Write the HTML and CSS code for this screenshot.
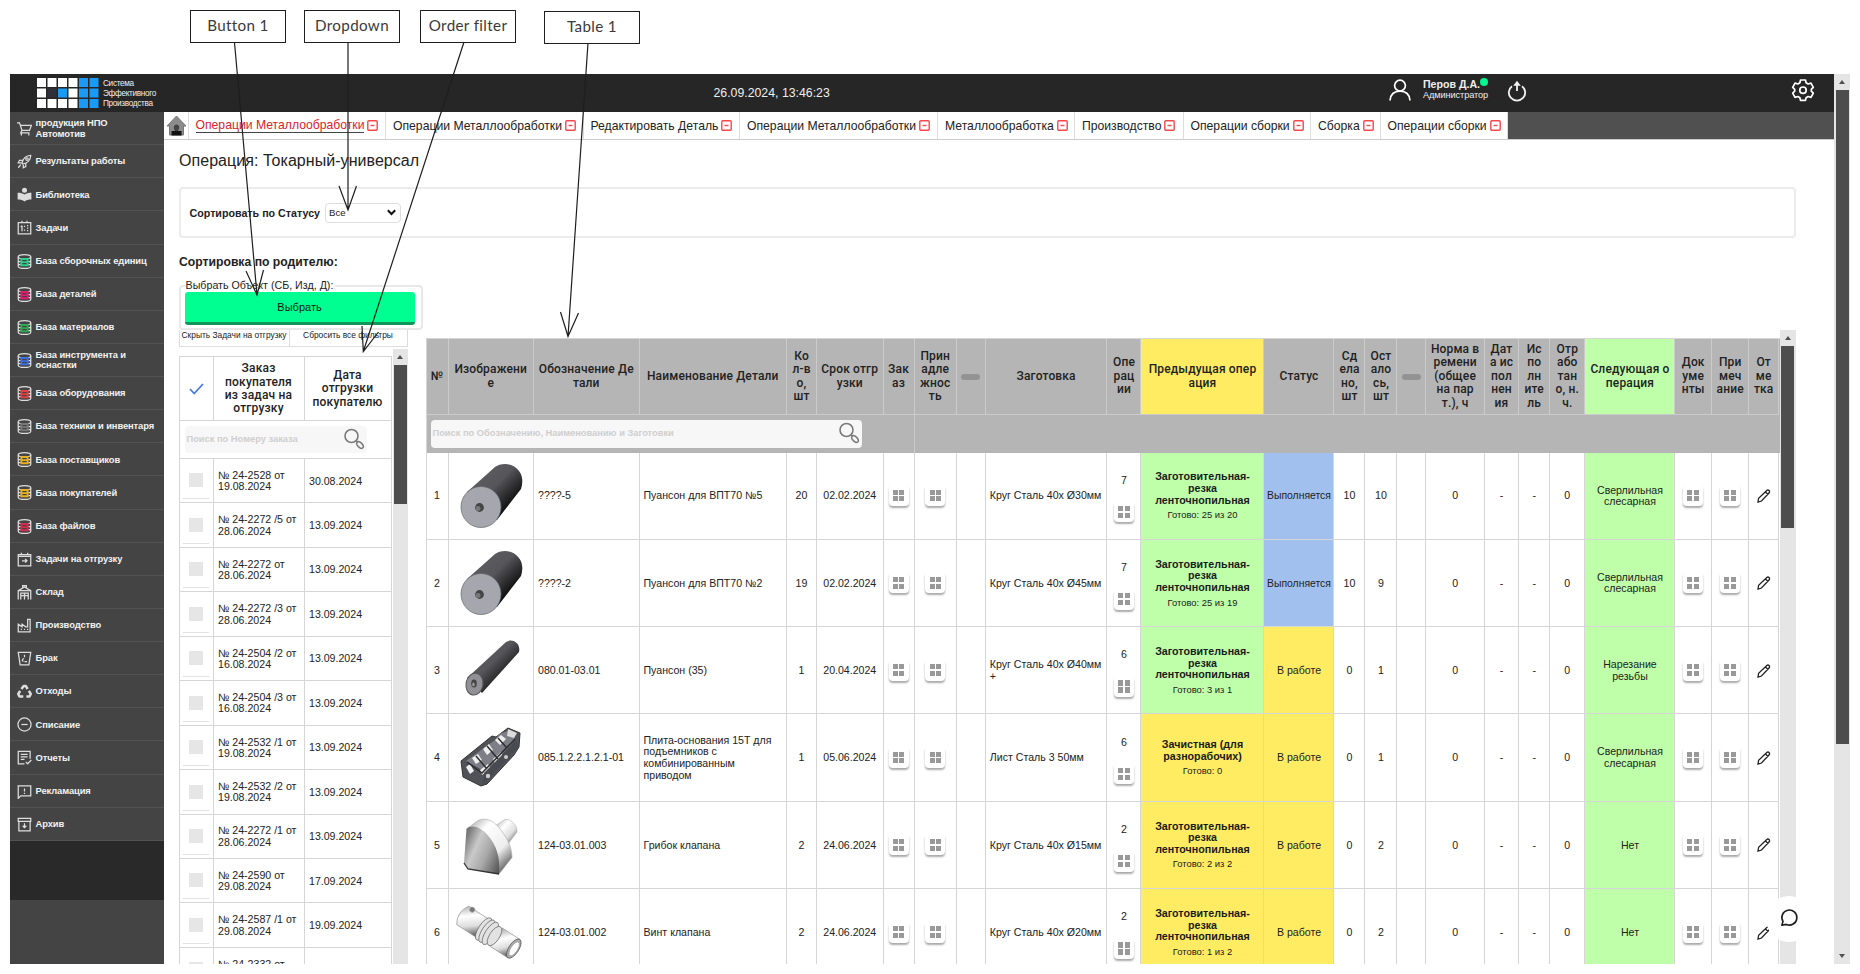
FILE: index.html
```html
<!DOCTYPE html>
<html lang="ru">
<head>
<meta charset="utf-8">
<title>Операции Металлообработки</title>
<link rel="stylesheet" href="styles.css">
</head>
<body>
<div class="app">
  <div class="page">
    <header class="top">
      <svg class="logo" width="62" height="31" viewBox="0 0 62 31" id="logo"></svg>
      <div class="brand">Система<br>Эффективного<br>Производства</div>
      <div class="clock">26.09.2024, 13:46:23</div>
      <svg class="person" width="24" height="24" viewBox="0 0 24 24" fill="none" stroke="#fff" stroke-width="1.7"><circle cx="12" cy="7.6" r="5.4"/><path d="M2 22.5C2.5 16.5 6 13.2 12 13.2s9.500 3.300 10 9.300"/></svg>
      <div class="user"><b>Перов Д.А.<i class="dot"></i></b><span>Администратор</span></div>
      <svg class="power" width="22" height="24" viewBox="0 0 22 24" fill="none" stroke="#f2f2f2" stroke-width="1.800"><path d="M6 7.200A8.200 8 0 1 0 16 7.200M11 12V4"/><path d="M7.200 6.800 11 1.800l3.800 5z" fill="#f2f2f2" stroke="none"/></svg>
      <svg class="gear" width="24" height="24" viewBox="0 0 24 24" fill="none" stroke="#fff" stroke-width="1.7" stroke-linejoin="round"><path d="M9.500 2h5l.6 2.800 2 1.200 2.900-.9 2.300 4.200-2 2v1.900l2 2-2.300 4.200-2.900-.9-2 1.200-.6 2.600h-5l-.6-2.600-2-1.200-2.900.9-2.300-4.200 2-2v-1.900l-2-2L4 5.100l2.900.9 2-1.200z"/><circle cx="12" cy="12.200" r="3.200"/></svg>
    </header>
    <div class="below">
      <nav class="side" id="side"></nav>
      <main class="main">
        <div class="tabs" id="tabs">
          <div class="home"><svg width="21" height="22" viewBox="0 0 21 22"><path d="M10.500 1 1 11h2.500v9h14v-9H20z" fill="#8c8c8c" stroke="#777"/><path d="M7.500 20c-1-3 .5-4 1.500-4.500-2-2-1.500-6 1.500-6s3.500 4 1.500 6c1 .5 2.500 1.500 1.500 4.500z" fill="#444"/><path d="M5.500 16h10v4.500h-10z" fill="#111"/></svg></div>
        </div>
        <h1 class="title">Операция: Токарный-универсал</h1>
        <section class="filter">
          <b class="filter-label">Сортировать по Статусу</b>
          <div class="select"><span>Все</span><svg width="9" height="7" viewBox="0 0 9 7"><path d="m.8 1.200 3.700 3.800 3.700-3.800" fill="none" stroke="#111" stroke-width="2"/></svg></div>
        </section>
        <b class="parent">Сортировка по родителю:</b>
        <div class="work">
          <section class="orders">
            <fieldset class="pick"><legend>Выбрать Объект (СБ, Изд, Д):</legend><button class="choose">Выбрать</button></fieldset>
            <div class="actions"><span>Скрыть Задачи на отгрузку</span><span>Сбросить все фильтры</span></div>
            <div class="list">
              <div class="list-body" id="orders">
                <div class="orow ohead"><div><svg width="15" height="12" viewBox="0 0 15 12"><path d="m1 6 4.200 4.500L14 1" fill="none" stroke="#4a78e8" stroke-width="1.800"/></svg></div><div>Заказ<br>покупателя<br>из задач на<br>отгрузку</div><div>Дата<br>отгрузки<br>покупателю</div></div>
                <div class="osearch"><div class="field"><span>Поиск по Номеру заказа</span><svg width="22" height="22" viewBox="0 0 22 22" fill="none" stroke="#7a7a7a"><circle cx="8.500" cy="8" r="6.500" stroke-width="1.600"/><path d="m13 12.500 2 2" stroke-width="1.500"/><ellipse cx="17" cy="17" rx="4" ry="2.300" transform="rotate(45 17 17)" stroke-width="1.500"/></svg></div></div>
              </div>
              <div class="bar bar-list"><i class="up"></i><i class="thumb"></i></div>
            </div>
          </section>
          <section class="parts">
            <div class="table" id="table"></div>
            <div class="bar bar-table"><i class="up"></i><i class="thumb"></i></div>
          </section>
        </div>
        <div class="chat"><svg width="19" height="19" viewBox="0 0 19 19"><path d="M1.800 17.200 3 13.500A7.500 7.500 0 1 1 6.300 16.400z" fill="none" stroke="#1c1c1c" stroke-width="1.600" stroke-linejoin="round"/></svg></div>
      </main>
    </div>
  </div>
  <div class="bar bar-page"><i class="up"></i><i class="thumb"></i><i class="down"></i></div>
</div>

<div class="note n1">Button 1</div>
<div class="note n2">Dropdown</div>
<div class="note n3">Order filter</div>
<div class="note n4">Table 1</div>
<svg class="arrows" width="700" height="360" viewBox="0 0 700 360" fill="none" stroke="#1e1e1e" stroke-width="1.200"><path d="M234.500 42.500 257 295M246 271l11 24 6.500-25M348 42v168M339 186l9 24 8.500-24M464 42 363.300 351.500M362 326l1.300 25.500 15.200-19.500M588 43l-20 293.500M560.500 312l7.500 24.500 10.500-23.500"/></svg>
<script src="app.js"></script>
</body>
</html>
```
FILE: styles.css
```css
* { box-sizing: border-box; }
body { margin: 0; width: 1860px; height: 974px; overflow: hidden; background: #fff; color: #222; font-family: "Liberation Sans", Arial, sans-serif; }
.app { display: flex; margin: 74px 10px 10px; height: 890px; overflow: hidden; }
.page { width: 1824px; display: flex; flex-direction: column; }
.top { height: 38px; background: #262626; color: #eee; display: flex; align-items: flex-start; flex: none; }
.logo { margin: 3.500px 0 0 26.500px; }
.brand { margin: 4.500px 0 0 4.500px; width: 610.500px; font-size: 8.200px; line-height: 10.200px; letter-spacing: -.3px; }
.clock { margin-top: 12px; width: 674px; font-size: 12.300px; line-height: 15px; }
.person { margin-top: 4px; }
.user { margin: 4px 0 0 11.500px; width: 82px; display: flex; flex-direction: column; font-size: 9.200px; line-height: 11px; letter-spacing: -.1px; }
.user b { font-size: 10.600px; line-height: 12px; white-space: nowrap; letter-spacing: 0; }
.dot { display: inline-block; width: 8px; height: 8px; border-radius: 50%; background: #00f78f; vertical-align: 2px; }
.power { margin: 5px 0 0 1px; }
.gear { margin: 4px 0 0 262.500px; }
.below { display: flex; flex: 1; min-height: 0; }
.side { width: 153.500px; background: #444; color: #f2f2f2; flex: none; }
.item { height: 33.130px; display: flex; align-items: center; gap: 3.500px; padding: 1px 0 0 7px; border-bottom: 1px solid #525252; font-size: 9.400px; line-height: 10.500px; font-weight: bold; letter-spacing: -.1px; white-space: nowrap; }
.item svg { flex: none; }
.side-dark { height: 59px; background: #292929; }
.main { flex: 1; min-width: 0; position: relative; }
.tabs { height: 28px; background: #505050; display: flex; border-bottom: 1px solid #ccc; }
.home { width: 25.500px; background: #fff; border-right: 1px solid #ddd; padding: 3px 0 0 2px; }
.tab { background: #fff; border-right: 1px solid #ddd; padding: 0 0 0 7px; display: flex; align-items: center; gap: 3px; font-size: 12.200px; white-space: nowrap; color: #222; }
.tab.on { color: #d8232a; padding-left: 6.500px; }
.tab.on span { border-bottom: 1px solid #444; line-height: 14px; }
.title { margin: 12px 0 0 15.500px; height: 18px; font-size: 16px; line-height: 18px; font-weight: normal; letter-spacing: .05px; }
.filter { margin: 17px 0 0 15px; width: 1617px; height: 51px; border: 2px solid #ececec; border-radius: 4px; display: flex; align-items: center; padding-left: 9px; }
.filter-label { width: 135.500px; font-size: 10.700px; white-space: nowrap; }
.select { width: 76px; height: 20px; border: 1px solid #ddd; border-radius: 4px; display: flex; align-items: center; justify-content: space-between; padding: 0 4px 0 3px; font-size: 9.600px; }
.parent { display: block; margin: 17px 0 0 15.500px; height: 14px; font-size: 12.200px; line-height: 14px; }
.work { display: flex; margin: 11px 0 0 15px; height: 684px; }
.orders { width: 247px; }
.pick { margin: 0; width: 244px; height: 50px; border: 2px solid #e8e8e8; border-radius: 4px; padding: 0 5px; min-width: 0; }
.pick legend { padding: 0 2px 0 0; font-size: 10.700px; height: 12px; line-height: 10px; }
.choose { display: block; width: 230px; height: 33px; border: 0; border-bottom: 3px solid #12955a; border-radius: 3px; background: #00ff91; font: 11px "Liberation Sans", Arial, sans-serif; padding: 0; color: #111; margin-left: -1px; }
.actions { display: flex; height: 17px; width: 229px; border: 1px solid #ddd; border-top: 0; font-size: 8.400px; line-height: 10px; text-align: center; white-space: nowrap; }
.actions span { width: 110px; border-right: 1px solid #ddd; }
.actions span + span { width: 117px; border: 0; }
.list { display: flex; height: 617px; margin-top: 2px; }
.list-body { width: 213px; margin-top: 7px; border: 1px solid #d6d6d6; border-right: 0; margin-right: 1px; overflow: hidden; }
.orow { display: grid; grid-template-columns: 34px 91px 87px; height: 44.450px; font-size: 10.600px; line-height: 11.300px; }
.orow > div { border-right: 1px solid #d6d6d6; border-bottom: 1px solid #d6d6d6; display: flex; align-items: center; padding: 1px 0 0 4.500px; white-space: nowrap; }
.orow > .cb { padding: 0 4px 3px; flex-direction: column; justify-content: flex-end; gap: 11px; }
.cb i { width: 14px; height: 14px; background: #e6e6e6; }
.cb u { width: 26px; height: 1px; background: #e2e2e2; }
.orow.ohead { height: 64px; font-size: 12px; line-height: 13.400px; text-align: center; font-family: Roboto, sans-serif; font-weight: 500; letter-spacing: .2px; }
.orow.ohead > div { justify-content: center; padding: 1px 0 0; }
.osearch { height: 38px; border-bottom: 1px solid #d6d6d6; border-right: 1px solid #d6d6d6; padding: 5px; }
.field { width: 182px; height: 27px; border-radius: 4px; background: #f7f7f7; display: flex; align-items: center; justify-content: space-between; padding: 0 2px 2px 2px; font-size: 9.300px; font-weight: bold; color: #cfcfcf; white-space: nowrap; }
.bar { width: 15px; background: #e5e5e5; display: flex; flex-direction: column; align-items: center; flex: none; }
.bar .up, .bar .down { width: 0; height: 0; border: 3.500px solid transparent; border-top: 0; border-bottom: 4px solid #505050; margin: 6px 0; flex: none; }
.bar .down { border-top: 4px solid #505050; border-bottom: 0; margin-top: auto; }
.bar .thumb { width: 13px; background: #4d4d4d; }
.bar-list .thumb { height: 139px; }
.bar-table { width: 16px; }
.bar-table .thumb { height: 182px; }
.bar-page { width: 16px; }
.bar-page .thumb { height: 654px; }
.parts { margin-top: 50px; display: flex; height: 634px; overflow: hidden; }
.table { width: 1354px; margin-top: 7.500px; border-left: 1px solid #d6d6d6; border-top: 1px solid #d6d6d6; overflow: hidden; }
.tr { display: grid; grid-template-columns: 22px 85.500px 105.500px 147.500px 30px 66.500px 31px 42.500px 28.800px 121.700px 34px 123px 70px 31px 32px 29px 58.300px 34.400px 31px 35.300px 90px 36.500px 37.500px 29.500px; height: 87.300px; font-size: 10.600px; line-height: 11.600px; }
.tr > div { border-right: 1px solid #d6d6d6; border-bottom: 1px solid #d6d6d6; display: flex; flex-direction: column; align-items: center; justify-content: center; text-align: center; white-space: nowrap; overflow: hidden; padding-top: 1px; }
.tr > .l { align-items: flex-start; text-align: left; padding-left: 4px; }
.tr > .blue { font-size: 10.400px; }
.tr > .pic { padding: 0; }
.th { height: 76px; background: #b5b5b5; font: 500 12px/13.400px Roboto, sans-serif; letter-spacing: .15px; color: #222; }
.th > div { border-right-color: #cbcbcb; border-bottom-color: #cbcbcb; }
.dash { width: 19px; height: 6px; border-radius: 3px; background: #939393; }
.search { height: 38px; background: #b5b5b5; display: flex; }
.search > div { width: 488px; border-right: 1px solid #cbcbcb; padding: 5px 4px; }
.search .field { width: 431px; height: 28px; }
.green { background: #bfffa9; }
.yellow { background: #ffec62; }
.blue { background: #a2c0ee; }
.tr > .prev { font-weight: bold; color: #1a1a1a; font-size: 10.700px; }
.prev small { font-weight: normal; font-size: 9.400px; margin-top: 3px; }
.btn { width: 20px; height: 21px; border-radius: 4px; background: #fff; box-shadow: 0 2px 2px #aaa; display: grid; grid-template-columns: 5px 5px; grid-template-rows: 5px 5px; gap: 1.500px; place-content: center; margin-top: -1px; }
.btn i { background: #999; }
.num { margin: 5px 0 12px; }
.num + .btn { grid-template-columns: 5.500px 5.500px; grid-template-rows: 5.500px 5.500px; margin-top: 3px; }
.chat { position: absolute; left: 1602.500px; top: 784px; width: 46px; height: 46px; border-radius: 50%; background: #fff; display: grid; place-content: center; padding: 0 0 3px 1px; }
.note { position: absolute; width: 96px; height: 33px; border: 1.500px solid #1e1e1e; background: #fff; text-align: center; font: 15.200px/29px Lato, sans-serif; color: #3a3a3a; letter-spacing: .35px; white-space: nowrap; }
.n1 { left: 190px; top: 10px; }
.n2 { left: 304px; top: 9.500px; }
.n3 { left: 420px; top: 9.500px; }
.n4 { left: 544px; top: 11px; }
.arrows { position: absolute; left: 0; top: 0; }
```
FILE: app.js
```js
const $ = id => document.getElementById(id);

// Logo: W white, B blue, D dark
$('logo').innerHTML = ['WWWWBB', 'WDBWBB', 'WWWWBB'].map((row, y) => [...row].map((c, x) =>
  `<rect x="${x * 10.5}" y="${y * 10.5}" width="9" height="9" fill="${{ W: '#fff', B: '#1b9af5', D: '#30303a' }[c]}"/>`).join('')).join('');

const svg = (body, extra = '') => `<svg width="15" height="15" viewBox="0 0 24 24" fill="none" stroke="#ddd" stroke-width="2" ${extra}>${body}</svg>`;
const db = color => svg(`<ellipse cx="12" cy="4.500" rx="10" ry="3.500"/><path d="M2 4.500v15c0 2 4 3.500 10 3.500s10-1.500 10-3.500v-15M2 12h4M18 12h4M2 17h4M18 17h4"/><path d="M7 8h10v10H7zM7 13h10" stroke="${color}" stroke-width="3"/>`);
const items = [
  ['продукция НПО<br>Автомотив', svg('<path d="M0 3h4l4 12h12l3-8H6M8 15l-2 4h14M7 19v4M19 19v4"/>')],
  ['Результаты работы', svg('<path d="M8 15C9 8 14 2 22 2c0 8-6 13-13 14zM9 10H4l-2 4h5M14 15v5l-4 2v-5M6 17l-4 5"/><circle cx="16" cy="8" r="2"/>')],
  ['Библиотека', svg('<circle cx="12" cy="5" r="4" fill="#ddd" stroke="none"/><path d="M1 9c5 0 8 1 11 3 3-2 6-3 11-3v11c-5 0-8 1-11 3-3-2-6-3-11-3z" fill="#ddd" stroke="none"/>')],
  ['Задачи', svg('<path d="M2 4h20v18H2zM8 1v4M16 1v4M8 9v9M6 11l2-2M12 9v2M12 15v2M16 9h2M16 13h2M16 17h2"/>')],
  ['База сборочных единиц', db('#27d08a')], ['База деталей', db('#e3186f')], ['База материалов', db('#2ea94f')],
  ['База инструмента и<br>оснастки', db('#3c6fe0')], ['База оборудования', db('#e04040')], ['База техники и инвентаря', db('#777')],
  ['База поставщиков', db('#e8b020')], ['База покупателей', db('#e8b020')], ['База файлов', db('#d8284c')],
  ['Задачи на отгрузку', svg('<path d="M2 4h20v18H2zM2 7h20M7 1v4M17 1v4M8 14h8M13 11l3 3-3 3"/>')],
  ['Склад', svg('<path d="M2 23V9l10-6 10 6v14M2 9h20M6 23V13h12v10M6 17h12M12 13v10M9 4V1h6v3"/>')],
  ['Производство', svg('<path d="M2 22V10l6 4v-4l6 4h3V2h4v20zM6 18h2M11 18h2M16 18h2"/>')],
  ['Брак', svg('<path d="M2 2h20l-3 20H5zM12 6v4M8 14l3-2M12 17h4M10 17l-2-3"/>')],
  ['Отходы', svg('<path d="m7 8 4-5h3l3 5M19 11l3 5-2 4h-5M10 20H4l-2-4 3-5"/>', 'stroke-linejoin="round" style="stroke-width:4"')],
  ['Списание', svg('<circle cx="12" cy="12" r="10.500"/><path d="M7 12h10"/>')],
  ['Отчеты', svg('<path d="M12 22H2V2h19v12M6 7h11M6 11h11M6 15h6M14 19l3 3 6-6"/>')],
  ['Рекламация', svg('<path d="M2 23V3h20v16H6zM12 7v5M12 14v2"/>')],
  ['Архив', svg('<path d="M2 2h20v5H2zM3 7v15h18V7M12 10v7M9 14l3 3 3-3"/>')]
];
$('side').innerHTML = items.map(([t, i]) => `<div class="item">${i}<span>${t}</span></div>`).join('') + '<div class="side-dark"></div>';

// Tabs: title and column width
const tabs = [['Операции Металлообработки', 197], ['Операции Металлообработки', 197.5], ['Редактировать Деталь', 156.5], ['Операции Металлообработки', 198], ['Металлообработка', 137], ['Производство', 108.5], ['Операции сборки', 127.5], ['Сборка', 69.5], ['Операции сборки', 127.5]];
$('tabs').innerHTML += tabs.map(([t, w], i) => `<div class="tab${i ? '' : ' on'}" style="width:${w}px"><span>${t}</span><svg width="11" height="11" viewBox="0 0 11 11" fill="none" stroke="#f5474c" stroke-width="1.400"><rect x=".8" y=".8" width="9.400" height="9.400" rx="1"/><path d="M3.500 5.500h4"/></svg></div>`).join('');

const orders = [['2528', '19.08.2024', '30.08.2024'], ['2272 /5', '28.06.2024', '13.09.2024'], ['2272', '28.06.2024', '13.09.2024'], ['2272 /3', '28.06.2024', '13.09.2024'], ['2504 /2', '16.08.2024', '13.09.2024'], ['2504 /3', '16.08.2024', '13.09.2024'], ['2532 /1', '19.08.2024', '13.09.2024'], ['2532 /2', '19.08.2024', '13.09.2024'], ['2272 /1', '28.06.2024', '13.09.2024'], ['2590', '29.08.2024', '17.09.2024'], ['2587 /1', '29.08.2024', '19.09.2024'], ['2332', '', '']];
$('orders').innerHTML += orders.map(([n, d, s]) => `<div class="orow"><div class="cb"><i></i><u></u></div><div>№ 24-${n} от<br>${d || '&nbsp;'}</div><div>${s}</div></div>`).join('');

const heads = ['№', 'Изображени<br>е', 'Обозначение Де<br>тали', 'Наименование Детали', 'Ко<br>л-в<br>о,<br>шт', 'Срок отгр<br>узки', 'Зак<br>аз', 'Прин<br>адле<br>жнос<br>ть', '<i class="dash"></i>', 'Заготовка', 'Опе<br>рац<br>ии', 'Предыдущая опер<br>ация', 'Статус', 'Сд<br>ела<br>но,<br>шт', 'Ост<br>ало<br>сь,<br>шт', '<i class="dash"></i>', 'Норма в<br>ремени<br>(общее<br>на пар<br>т.), ч', 'Дат<br>а ис<br>пол<br>нен<br>ия', 'Ис<br>по<br>лн<br>ите<br>ль', 'Отр<br>або<br>тан<br>о, н.<br>ч.', 'Следующая о<br>перация', 'Док<br>уме<br>нты', 'При<br>меч<br>ание', 'От<br>ме<br>тка'];

const pic = (id, stops, body) => `<svg width="84" height="86" viewBox="0 0 84 86"><defs><linearGradient id="${id}" x1="0" y1="0" x2="1" y2="1">${stops}</linearGradient></defs>${body}</svg>`;
const dark = '<stop offset=".2" stop-color="#5b5b60"/><stop offset=".45" stop-color="#55555a"/><stop offset=".75" stop-color="#111"/>';
const light = '<stop offset="0" stop-color="#aaa"/><stop offset=".35" stop-color="#fff"/><stop offset=".65" stop-color="#ddd"/><stop offset="1" stop-color="#444"/>';
const cyl = id => pic(id, dark, `<path d="M18 39 46 14c6-4 17-5 24 4 4 5 4 12 2 18L48 67z" fill="url(#${id})"/><ellipse cx="32" cy="54" rx="20" ry="20.500" fill="#a6a6ae" stroke="#66666b" stroke-width=".7"/><circle cx="30.500" cy="54.500" r="4.400" fill="#444"/><circle cx="29" cy="55.500" r="2.500" fill="#777"/>`);
const cone = '<linearGradient id="cn" x1="0" y1=".3" x2="1" y2=".9"><stop offset="0" stop-color="#777"/><stop offset=".3" stop-color="#c9c9c9"/><stop offset=".6" stop-color="#a8a8a8"/><stop offset="1" stop-color="#555"/></linearGradient><linearGradient id="bd" x1="0" y1="0" x2=".8" y2="1"><stop offset="0" stop-color="#999"/><stop offset=".3" stop-color="#fff"/><stop offset=".7" stop-color="#eee"/><stop offset="1" stop-color="#555"/></linearGradient>';
const pics = [
  cyl('c1'), cyl('c2'),
  pic('c3', dark, '<path d="m18 51 39-36c6-4 15 1 13 10L33 66z" fill="url(#c3)"/><ellipse cx="25.500" cy="57" rx="8.500" ry="11" fill="#909096" stroke="#555" transform="rotate(10 25 57)"/><ellipse cx="25" cy="56.500" rx="2.800" ry="4" fill="#444"/><ellipse cx="24.500" cy="57.500" rx="1.300" ry="2" fill="#999"/>'),
  pic('c4', dark, '<path d="m12 46 31-25 4 1 12-9 12 5-1 14-5 8-27 29-6 2-18-9z" fill="#515158" stroke="#333"/><path d="m17 46 29-21 4-6 9-3 7 3-1 7-28 31z" fill="#7e7e86"/><path d="m23 43 6-4 4 6-6 4zM34 34l6-5 4 6-6 5zM46 25l6-5 5 4-6 6zM31 55l8-6 3 5-9 6zM44 44l8-7 2 6-8 6zM21 49l4 7-4 3-4-7z" fill="#eee"/><path d="m18 47 15 11 33-34M27 41l11 13M38 31l11 13M49 23l9 10" fill="none" stroke="#2d2d31" stroke-width="1.500"/><path d="m34 70 1-12 32-32 2 6z" fill="#494950"/><circle cx="39" cy="61" r="2.200" fill="#ccc"/><circle cx="57" cy="42" r="2" fill="#ccc"/><path d="m59 14 9 4-3 5-7-2z" fill="#ddd"/>'),
  pic('c5', light, `<defs>${cone}</defs><path d="m46 24 9-6c5-3 14 5 13 12l-9 12z" fill="url(#c5)" stroke="#aaa" stroke-width=".5"/><path d="M17.500 27 29 18.500c6-3 14-1 20 6 8 9 14 20 14 31L50 72 30 50z" fill="url(#bd)" stroke="#aaa" stroke-width=".6"/><path d="M17.500 27c5-5 14-2 21 6 9 10 13 22 11.500 39L19 67l-4-6z" fill="url(#cn)"/><path d="m15 61 4 6 31 5" fill="none" stroke="#333" stroke-width="1.300"/>`),
  pic('c6', light, '<g transform="translate(13 20) rotate(33)" stroke="#999" stroke-width=".7"><path d="M4-6h24v22H4q-7-11 0-22z" fill="url(#c6)"/><path d="M44-6h21v22H44z" fill="url(#c6)"/><g fill="#e2e2e2" stroke="#666"><ellipse cx="29" cy="5" rx="5" ry="13"/><ellipse cx="33" cy="5" rx="5" ry="13"/><ellipse cx="37" cy="5" rx="5" ry="13"/><ellipse cx="42" cy="5" rx="5" ry="11"/></g><ellipse cx="65" cy="5" rx="5" ry="11" fill="#aaa" stroke="#555"/><ellipse cx="65.500" cy="5" rx="3.400" ry="8" fill="#fff"/><circle cx="9" cy="-5" r="2.500" fill="#777"/></g>')
];

const cut = 'Заготовительная-<br>резка<br>ленточнопильная';
const drill = 'Сверлильная<br>слесарная';
const rows = [
  ['????-5', 'Пуансон для ВПТ70 №5', 20, '02.02.2024', 'Круг Сталь 40х Ø30мм', 7, cut, '25 из 20', 'green', 'Выполняется', 10, 10, drill],
  ['????-2', 'Пуансон для ВПТ70 №2', 19, '02.02.2024', 'Круг Сталь 40х Ø45мм', 7, cut, '25 из 19', 'green', 'Выполняется', 10, 9, drill],
  ['080.01-03.01', 'Пуансон (35)', 1, '20.04.2024', 'Круг Сталь 40х Ø40мм<br>+', 6, cut, '3 из 1', 'green', 'В работе', 0, 1, 'Нарезание<br>резьбы'],
  ['085.1.2.2.1.2.1-01', 'Плита-основания 15Т для<br>подъемников с<br>комбинированным<br>приводом', 1, '05.06.2024', 'Лист Сталь 3 50мм', 6, 'Зачистная (для<br>разнорабочих)', '0', 'yellow', 'В работе', 0, 1, drill],
  ['124-03.01.003', 'Грибок клапана', 2, '24.06.2024', 'Круг Сталь 40х Ø15мм', 2, cut, '2 из 2', 'yellow', 'В работе', 0, 2, 'Нет'],
  ['124-03.01.002', 'Винт клапана', 2, '24.06.2024', 'Круг Сталь 40х Ø20мм', 2, cut, '1 из 2', 'yellow', 'В работе', 0, 2, 'Нет']
];
const btn = '<span class="btn"><i></i><i></i><i></i><i></i></span>';
const pencil = '<svg width="14" height="14" viewBox="0 0 14 14" fill="none" stroke="#222" stroke-width="1.300"><path d="m1 13 .6-3.800L9.800 1.500q1.200-1 2.200 0t.2 2.300L4.500 12zM8.500 3l2.500 2.500"/></svg>';
const cell = (html, cls = '') => `<div class="${cls}">${html}</div>`;
const lens = document.querySelector('.osearch svg').outerHTML;

$('table').innerHTML =
  '<div class="tr th">' + heads.map((h, i) => cell(h, i === 11 ? 'yellow' : i === 20 ? 'green' : '')).join('') + '</div>' +
  `<div class="search"><div><div class="field"><span>Поиск по Обозначению, Наименованию и Заготовки</span>${lens}</div></div></div>` +
  rows.map((r, i) => '<div class="tr">' + [
    cell(i + 1), cell(pics[i], 'pic'), cell(r[0], 'l'), cell(r[1], 'l'), cell(r[2]), cell(r[3]), cell(btn), cell(btn), cell(''),
    cell(r[4], 'l'), cell(`<span class="num">${r[5]}</span>${btn}`), cell(`<span>${r[6]}</span><small>Готово: ${r[7]}</small>`, 'prev ' + r[8]),
    cell(r[9], i < 2 ? 'blue' : 'yellow'), cell(r[10]), cell(r[11]), cell(''), cell(0), cell('-'), cell('-'), cell(0),
    cell(r[12], 'green'), cell(btn), cell(btn), cell(pencil)
  ].join('') + '</div>').join('');
```
